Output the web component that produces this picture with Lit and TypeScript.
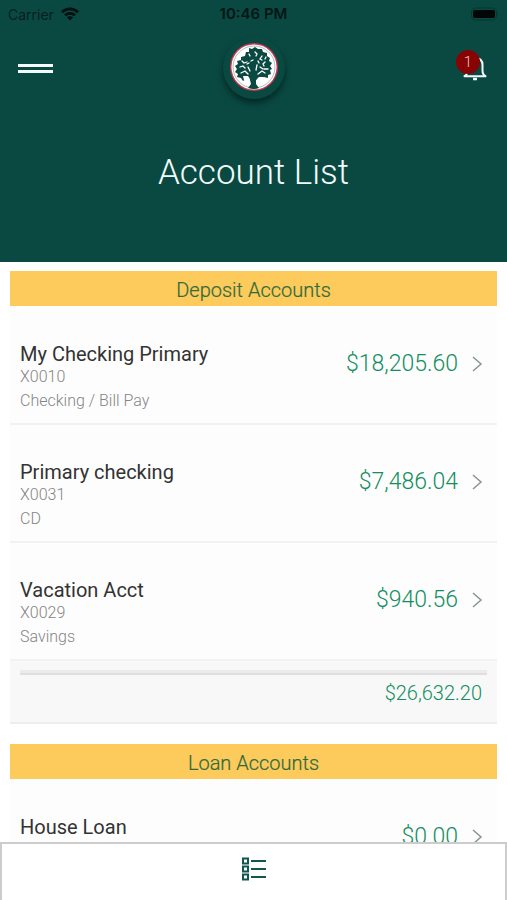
import { LitElement, html, css, svg, nothing } from "lit";
import { customElement, property } from "lit/decorators.js";

interface Account {
  name: string;
  number?: string;
  kind?: string;
  balance: string;
}

const deposits: Account[] = [
  { name: "My Checking Primary", number: "X0010", kind: "Checking / Bill Pay", balance: "$18,205.60" },
  { name: "Primary checking", number: "X0031", kind: "CD", balance: "$7,486.04" },
  { name: "Vacation Acct", number: "X0029", kind: "Savings", balance: "$940.56" },
];

const loans: Account[] = [{ name: "House Loan", balance: "$0.00" }];

@customElement("account-group")
export class AccountGroup extends LitElement {
  @property() heading = "";
  @property() total = "";
  @property({ attribute: false }) accounts: Account[] = [];

  static styles = css`
    :host { display: block; }
    h2 {
      margin: 0;
      background: #fdca5c;
      color: #2f6a3c;
      font-size: 20px;
      font-weight: 300;
      line-height: 38px;
      height: 35px;
      text-align: center;
      -webkit-text-stroke: 0.2px currentColor;
    }
    ul { list-style: none; margin: 0; padding: 1px 0 0; background: #fdfdfd; }
    .row {
      display: flex;
      align-items: flex-start;
      justify-content: space-between;
      box-sizing: border-box;
      min-height: 118px;
      padding: 0 13px 0 10px;
      border-bottom: 2px solid #f2f2f2;
      color: inherit;
      text-decoration: none;
    }
    .info { padding-top: 35px; color: #858585; font-size: 16px; font-weight: 300; }
    .name { color: #333; font-size: 20px; font-weight: 400; line-height: 24px; }
    .number { line-height: 22px; }
    .kind { line-height: 26px; }
    .side { display: flex; align-items: center; gap: 12px; padding-top: 43px; }
    .balance { color: #138e61; font-size: 23px; font-weight: 300; line-height: 28px; }
    .total {
      display: block;
      box-sizing: border-box;
      min-height: 63px;
      padding: 9px 10px 0;
      background: #f8f8f8;
      border-bottom: 2px solid #eee;
    }
    .rule { height: 3px; border-bottom: 2px solid #dfdfdf; background: #ebebeb; }
    .sum {
      padding: 6px 5px 0;
      text-align: right;
      color: #138e61;
      font-size: 20px;
      font-weight: 300;
      line-height: 24px;
    }
  `;

  render() {
    return html`
      <h2>${this.heading}</h2>
      <ul>
        ${this.accounts.map(
          (a) => html`<li>
            <a class="row" href="#account">
              <div class="info">
                <div class="name">${a.name}</div>
                ${a.number ? html`<div class="number">${a.number}</div>` : nothing}
                ${a.kind ? html`<div class="kind">${a.kind}</div>` : nothing}
              </div>
              <div class="side">
                <span class="balance">${a.balance}</span>
                <svg width="14" height="18" viewBox="0 0 14 18" fill="none" stroke="#8a9490" stroke-width="1.5" aria-hidden="true">
                  <path d="M3 2l8 7-8 7" />
                </svg>
              </div>
            </a>
          </li>`
        )}
      </ul>
      ${this.total
        ? html`<div class="total"><div class="rule"></div><div class="sum">${this.total}</div></div>`
        : nothing}
    `;
  }
}

@customElement("app-root")
export class AppRoot extends LitElement {
  static styles = css`
    :host {
      display: flex;
      flex-direction: column;
      height: 100vh;
      overflow: hidden;
      background: #fff;
      font-family: Roboto, "Liberation Sans", sans-serif;
    }
    header { flex: none; background: #0a4942; padding-bottom: 64px; }
    .status {
      display: grid;
      grid-template-columns: 1fr auto 1fr;
      align-items: center;
      height: 28px;
      padding: 0 8px;
      color: #04201d;
      font-family: Inter, sans-serif;
      font-size: 14px;
    }
    .carrier { display: flex; align-items: center; gap: 7px; }
    .time { font-size: 15px; font-weight: 600; line-height: 18px; color: #031614; }
    .battery { justify-self: end; }
    .bar {
      display: grid;
      grid-template-columns: 1fr auto 1fr;
      align-items: center;
      height: 80px;
      padding: 0 18px;
    }
    button { border: 0; padding: 0; background: none; cursor: pointer; }
    .menu { justify-self: start; display: grid; gap: 3px; width: 35px; }
    .menu span { height: 3px; background: #f4fbfa; }
    .logo {
      display: grid;
      place-items: center;
      width: 62px;
      height: 62px;
      border-radius: 50%;
      box-shadow: 0 4px 6px #032824;
      background: #0a4942;
    }
    .logo svg { display: block; margin-bottom: 3px; }
    .bell { justify-self: end; position: relative; margin-right: 2px; }
    .bell svg { display: block; }
    .badge {
      position: absolute;
      right: 7px;
      top: -5px;
      width: 24px;
      height: 24px;
      border-radius: 50%;
      background: #870304;
      color: #e6c8c6;
      font: 300 15px/24px Roboto, sans-serif;
      text-align: center;
    }
    h1 {
      margin: 40px 0 0;
      color: #f2fbfa;
      text-align: center;
      font-size: 35px;
      font-weight: 300;
      line-height: 50px;
    }
    main {
      flex: 1;
      min-height: 0;
      overflow-y: auto;
      scrollbar-width: none;
      display: flex;
      flex-direction: column;
      gap: 20px;
      padding: 9px 10px 0;
    }
    account-group { flex: none; }
    nav {
      flex: none;
      display: grid;
      justify-items: center;
      align-items: start;
      box-sizing: border-box;
      height: 58px;
      border: 2px solid #ccc;
      border-bottom: 0;
      background: #fff;
    }
    .list { margin-top: 13px; }
    .list svg { display: block; }
  `;

  render() {
    return html`
      <header>
        <div class="status">
          <div class="carrier">
            <span>Carrier</span>
            <svg width="18" height="14" viewBox="0 0 18 14" fill="none" stroke="#02100f" stroke-width="2.6" aria-hidden="true">
              <path d="M1 5.2a11.4 11.4 0 0 1 16 0" />
              <path d="M4 8.4a7.2 7.2 0 0 1 10 0" />
              <path d="M9 13.6L5.9 10.6a4.4 4.4 0 0 1 6.2 0z" fill="#02100f" stroke="none" />
            </svg>
          </div>
          <span class="time">10:46 PM</span>
          <svg class="battery" width="28" height="14" viewBox="0 0 28 14" aria-hidden="true">
            <rect x=".5" y="1" width="25" height="12" rx="4" fill="none" stroke="#07352f" />
            <rect x="2" y="3" width="22" height="8" rx="2" fill="#010606" />
            <path d="M26.600 5v4q1.400-2 0-4z" fill="#07352f" />
          </svg>
        </div>
        <div class="bar">
          <button class="menu" aria-label="Menu"><span></span><span></span></button>
          <div class="logo">
            <svg width="50" height="50" viewBox="0 0 50 50" role="img" aria-label="Oak tree emblem">
              <circle cx="25" cy="25" r="24" fill="#c2384e" />
              <circle cx="25" cy="25" r="22.6" fill="#fff" />
              <circle cx="25" cy="25" r="21" fill="none" stroke="#8fa5a1" stroke-width=".7" />
              <path
                fill="#0a4942"
                d="M20 6l3 1 3-2 3 2 4 0 1 3 4 1 0 3 3 2-1 3 3 2-2 3 2 3-2 1 1 4-3 1 0 3-4-1-2 2-3-1-3 2 0 4 3 4q-5 2-11 0l3-4-1-4-4-1-3 2-2-3-4-1 1-3-3-2 2-3-2-3 3-2-1-3 4-1 0-3 4-1 1-4 3 0z"
              />
              <g fill="none" stroke="#fff" stroke-width="1.3" stroke-linecap="round">
                <path d="M11 25l3-1 2 2M13 19l2 2 3-1M20 12l1 2M26 10l2 2-1 2M33 14l-2 3 2 1M22 19l2-1M36 20l-2 2 1 2M39 27l-4 0" />
                <path d="M19 25l2 4M28 23l-1 5M31 25l3 2M12 31l4-2 3 3M29 32l4-3 3 2M18 22l2-1M29 19l1 2M37 15l-1 2" />
              </g>
              <path fill="#fff" d="M14 34l5 0 2 3-1 4-5-3zM30 35l5 0-1 3-5 3-1-4z" />
            </svg>
          </div>
          <button class="bell" aria-label="Notifications, 1 new">
            <svg width="24" height="26" viewBox="0 0 24 26" fill="none" stroke="#f4fbfa" stroke-width="2" aria-hidden="true">
              <path d="M1.5 21.2q3-1.5 3-6V10q0-7 7.5-7t7.500 7v5.200q0 4.500 3 6z" stroke-linejoin="round" />
              <path d="M10 24h4" stroke-width="2.5" />
            </svg>
            <span class="badge">1</span>
          </button>
        </div>
        <h1>Account List</h1>
      </header>
      <main>
        <account-group heading="Deposit Accounts" .accounts=${deposits} total="$26,632.20"></account-group>
        <account-group heading="Loan Accounts" .accounts=${loans}></account-group>
      </main>
      <nav>
        <button class="list" aria-label="Account list">
          <svg width="24" height="24" viewBox="0 0 24 24" fill="none" stroke="#12574d" stroke-width="2" aria-hidden="true">
            ${[4, 12, 20].map(
              (y) => svg`<rect x="1" y=${y - 2.5} width="5" height="5" /><path d=${`M9 ${y}h15`} />`
            )}
          </svg>
        </button>
      </nav>
    `;
  }
}
